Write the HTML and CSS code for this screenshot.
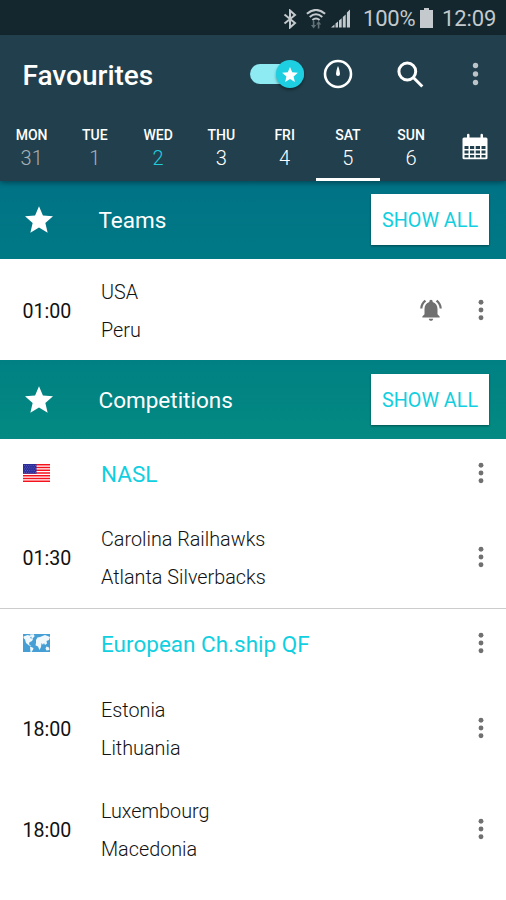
FILE: index.html
```html
<!DOCTYPE html>
<html lang="en">
<head>
<meta charset="utf-8">
<title>Favourites</title>
<link rel="stylesheet" href="styles.css">
</head>
<body>
<svg class="defs" width="0" height="0" aria-hidden="true">
  <symbol id="star" viewBox="2 2 20 19"><path d="M12 17.27 18.18 21l-1.64-7.03L22 9.24l-7.19-.61L12 2 9.19 8.63 2 9.24l5.46 4.73L5.82 21z"/></symbol>
  <symbol id="dots" viewBox="0 0 6 22"><circle cx="3" cy="3.2" r="2.45"/><circle cx="3" cy="11" r="2.45"/><circle cx="3" cy="18.8" r="2.45"/></symbol>
</svg>
<div class="status">
  <svg class="bt" viewBox="0 0 14 20"><path d="M1.5 5.5 12 14l-5 4.5v-17L12 6 1.5 14.5"/></svg>
  <svg class="wifi" viewBox="0 0 20 20"><path class="arc" d="M.9 4.8Q10-3 19.1 4.8M3.7 8Q10 2.6 16.3 8M6.4 11Q10 8 13.6 11"/><path class="traffic" d="M6.8 12h1.6v4h1.800l-2.600 3.500L5 16h1.800zM11.800 19.500v-4H10l2.600-3.500 2.600 3.500h-1.800v4z"/></svg>
  <svg class="signal" viewBox="0 0 19 19"><path d="M0 18.500 3.500 15.500v3zM4.500 14.500l2.500-2v6H4.500zM8 11.500l2.700-2.200v9.200H8zM11.800 8l2.900-2.600v13.100h-2.900zM15.900 3.500 19 .5v18h-3.100z"/></svg>
  <span class="pct">100%</span>
  <svg class="battery" viewBox="0 0 13 20"><path d="M4 0h5v2h4v18H0V2h4z"/></svg>
  <span class="clock">12:09</span>
</div>
<header class="header">
  <div class="toolbar">
    <h1>Favourites</h1>
    <div class="switch"><span class="knob"><svg><use href="#star"/></svg></span></div>
    <svg class="timer" viewBox="0 0 30 30"><circle cx="15" cy="15" r="13"/><path d="M15 7c1 2 2 6 2 8a2 2 0 0 1-4 0c0-2 1-6 2-8z"/></svg>
    <svg class="search" viewBox="0 0 27 27"><circle cx="10.300" cy="10.500" r="8.400"/><path d="m16.300 16.500 9 9"/></svg>
    <svg class="dots"><use href="#dots"/></svg>
  </div>
  <nav class="days">
    <div class="day past"><b>MON</b><span>31</span></div>
    <div class="day past"><b>TUE</b><span>1</span></div>
    <div class="day today"><b>WED</b><span>2</span></div>
    <div class="day"><b>THU</b><span>3</span></div>
    <div class="day"><b>FRI</b><span>4</span></div>
    <div class="day active"><b>SAT</b><span>5</span></div>
    <div class="day"><b>SUN</b><span>6</span></div>
    <div class="calendar"><svg viewBox="0 0 26 27"><path fill-rule="evenodd" d="M2 4.500h3V2q0-1.300 1.200-1.300T7.500 2v2.500h11V2q0-1.300 1.200-1.300T21 2v2.500h3q1.500 0 1.500 1.500v19q0 1.300-1.500 1.300H2Q.5 26.300.5 25V6Q.5 4.500 2 4.500zM2.500 13v3h4v-3zm5.500 0v3h4.200v-3zm5.700 0v3H18v-3zm5.800 0v3h4v-3zM2.500 17.500v3h4v-3zm5.500 0v3h4.200v-3zm5.700 0v3H18v-3zm5.800 0v3h4v-3zM2.500 22v2.500h4V22zM8 22v2.500h4.200V22zm5.700 0v2.500H18V22zm5.800 0v2.500h4V22z"/></svg></div>
  </nav>
</header>
<main>
  <section class="band teams"><svg class="star"><use href="#star"/></svg><h2>Teams</h2><button>SHOW ALL</button></section>
  <div class="match"><time>01:00</time><div class="names"><span>USA</span><span>Peru</span></div>
    <svg class="bell" viewBox="0 0 24 24"><path d="M7.580 4.080 6.150 2.650C3.750 4.480 2.170 7.300 2.030 10.500h2c.15-2.650 1.510-4.970 3.550-6.420zm12.390 6.420h2c-.15-3.200-1.730-6.020-4.120-7.850l-1.420 1.430c2.020 1.450 3.390 3.770 3.540 6.420zM18 11c0-3.070-1.640-5.640-4.500-6.320V4c0-.83-.67-1.500-1.500-1.500s-1.500.67-1.500 1.500v.68C7.630 5.360 6 7.920 6 11v5l-2 2v1h16v-1l-2-2zm-6 11c1.100 0 2-.9 2-2h-4c0 1.100.9 2 2 2z"/></svg>
    <svg class="dots"><use href="#dots"/></svg></div>
  <section class="band comps"><svg class="star"><use href="#star"/></svg><h2>Competitions</h2><button>SHOW ALL</button></section>
  <div class="league">
    <svg class="flag" viewBox="0 0 27 18"><path fill="#fff" d="M0 0h27v18H0z"/><path stroke="#f5121c" stroke-width="1.450" d="M0 .7h27M0 3.460h27M0 6.220h27M0 9h27M0 11.760h27M0 14.520h27M0 17.280h27"/><path fill="#2c2c9c" d="M0 0h13.500v9.700H0z"/><path stroke="#8080c8" stroke-width=".7" stroke-dasharray=".8 1.400" d="M1 1.500h12M2 3.200h11M1 4.900h12M2 6.600h11M1 8.300h12"/></svg>
    <h3>NASL</h3><svg class="dots"><use href="#dots"/></svg></div>
  <div class="match later"><time>01:30</time><div class="names"><span>Carolina Railhawks</span><span>Atlanta Silverbacks</span></div><svg class="dots"><use href="#dots"/></svg></div>
  <div class="league ruled">
    <svg class="flag" viewBox="0 0 27 18"><path fill="#459fd5" d="M0 0h27v18H0z"/><path fill="#fff" fill-opacity=".92" d="m.5 2.500 4-1.500 4 1L7 4l3 1-1 2-2.500 1.200-.5 2L8.500 12 6 11.500 3 9 2 5.500.5 4zM6.500 .5 11 .3l.5 2.200L9 5 8 2zM7 12.500l3.500 1.500-.5 1.800L8.500 18H7.500l-.3-3zM13 6l1.500-2.500L17 3l5-2 5 2-1 3-2.500 1 .5 2.500-2 1.500L21 9l-1 1.800L18.500 9l-.5 4-1.500 3L15 12.500l-2.500-1.300.5-2.400zM23.500 12.500l2.500 1 .5 2.500-3 .5-1-2z"/></svg>
    <h3>European Ch.ship QF</h3><svg class="dots"><use href="#dots"/></svg></div>
  <div class="match later"><time>18:00</time><div class="names"><span>Estonia</span><span>Lithuania</span></div><svg class="dots"><use href="#dots"/></svg></div>
  <div class="match later"><time>18:00</time><div class="names"><span>Luxembourg</span><span>Macedonia</span></div><svg class="dots"><use href="#dots"/></svg></div>
</main>
</body>
</html>
```
FILE: styles.css
```css
* { box-sizing: border-box; }
body { margin: 0; width: 506px; height: 900px; overflow: hidden; background: #fff; font-family: Roboto, sans-serif; color: #111; }
h1, h2, h3 { margin: 0; }
svg { display: block; flex: none; }
.defs { position: absolute; }
.status { height: 35px; background: #14272e; color: #c3c9cc; fill: #c3c9cc; display: flex; align-items: center; padding: 2px 0 0 283px; font-size: 22px; line-height: 35px; }
.bt { width: 14px; height: 20px; fill: none; stroke: #c3c9cc; stroke-width: 2; margin-right: 9px; }
.wifi { width: 20px; height: 20px; margin-right: 5px; }
.arc { fill: none; stroke: #c3c9cc; stroke-width: 2; }
.traffic { fill: #647278; }
.signal { width: 19px; height: 19px; margin-right: 13px; }
.pct { width: 57px; letter-spacing: -.2px; }
.battery { width: 13px; height: 20px; margin: 0 9px 2px 0; }
.clock { letter-spacing: -.1px; }
.header { height: 146px; background: #213f4c; color: #fff; position: relative; box-shadow: 0 2px 5px rgba(0, 30, 40, .5); }
.toolbar { height: 79px; display: flex; align-items: center; padding: 0 27px 1px 22.5px; }
h1 { font-size: 28px; font-weight: 500; line-height: 32px; width: 227.5px; padding-top: 4px; }
.switch { width: 53.5px; height: 20px; margin-right: 19px; border-radius: 10px; background: #8eebf3; display: flex; align-items: center; justify-content: flex-end; }
.knob { width: 28px; height: 28px; border-radius: 50%; background: #1dcfe0; box-shadow: 0 2px 3px rgba(0, 0, 0, .35); display: flex; align-items: center; justify-content: center; }
.knob svg { width: 16px; height: 15px; fill: #fff; }
.timer { width: 30px; height: 30px; margin-right: 44px; fill: #fff; }
.timer circle { fill: none; stroke: #fff; stroke-width: 2.6; }
.search { width: 27px; height: 27px; fill: none; stroke: #fff; stroke-width: 3; }
.dots { width: 6px; height: 22px; fill: #707070; margin-left: auto; }
.toolbar .dots { height: 24px; width: 7px; fill: #bbc4c8; }
.days { height: 67px; display: grid; grid-template-columns: repeat(8, 1fr); }
.day { text-align: center; padding-top: 12px; border-bottom: 3px solid transparent; }
.day b { display: block; font-size: 14px; line-height: 18px; font-weight: 500; }
.day span { display: block; font-size: 20px; line-height: 24px; padding-top: 2px; font-weight: 300; }
.past span { color: #a5b1b6; }
.today span { color: #20ccdc; }
.active { border-bottom-color: #fff; }
.calendar { display: flex; justify-content: center; padding: 19px 0 0 1px; }
.calendar svg { width: 26px; height: 27px; fill: #fff; }
.band { display: flex; align-items: center; color: #fff; padding: 0 17px 0 25px; }
.teams { height: 78px; padding-bottom: 1px; background: linear-gradient(#007386, #007985); }
.comps { height: 79px; background: linear-gradient(#008083, #048a82); }
.star { width: 28px; height: 27px; fill: #fff; }
h2 { font-size: 22.5px; line-height: 30px; font-weight: 400; margin-left: 45.5px; padding-top: 1px; }
button { width: 118px; height: 51px; margin-left: auto; padding: 2px 0 0; border: 0; background: #fff; color: #10cfe0; font: 400 19.8px/24px Roboto, sans-serif; box-shadow: 0 1px 2px rgba(0, 0, 0, .4); }
.match { height: 101px; display: flex; align-items: center; padding: 0 22.5px; }
time { width: 78.500px; font-size: 19.6px; line-height: 24px; padding-top: 4px; }
.names { display: grid; font-size: 19.8px; line-height: 38px; font-weight: 300; padding-top: 4px; }
.later { padding-bottom: 2px; }
.match .dots, .league .dots { margin-left: auto; }
.bell { width: 26px; height: 26px; fill: #707070; margin-left: auto; }
.match .bell + .dots { margin-left: 34px; }
.league { height: 68px; display: flex; align-items: center; padding: 0 22.5px 0 23px; }
.ruled { height: 70px; padding-bottom: 1px; border-top: 1px solid #ccc; }
.flag { width: 27px; height: 18px; margin-right: 51px; }
h3 { font-size: 22.5px; line-height: 30px; font-weight: 400; color: #10cfe0; padding-top: 1px; }
```
